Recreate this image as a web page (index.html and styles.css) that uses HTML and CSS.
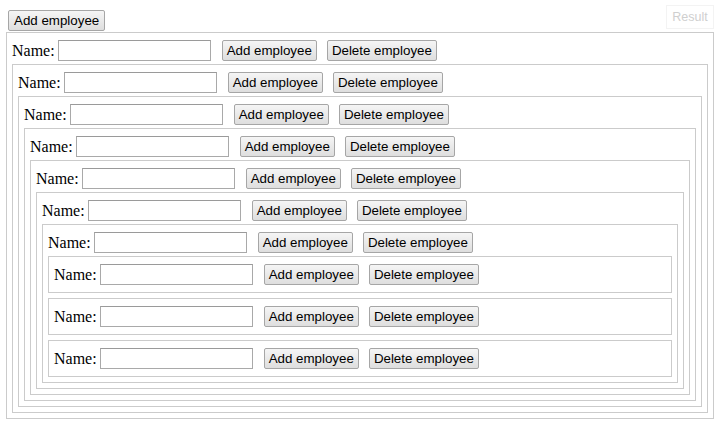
FILE: index.html
```html
<!DOCTYPE html>
<html lang="en">
<head>
  <meta charset="UTF-8" />
  <title>Employees</title>
  <link rel="stylesheet" href="styles.css">
</head>
<body>
  <div class="result-tag">Result</div>

  <div class="page">
    <button class="btn top-add" onclick="addRoot()">Add employee</button>
    <div id="tree"></div>
  </div>

  <script>
    // --- DATA ---
    let tree = [
      { name: "", children: [
        { name: "", children: [
          { name: "", children: [
            { name: "", children: [
              { name: "", children: [
                { name: "", children: [
                  { name: "", children: [
                    { name: "", children: [] },
                    { name: "", children: [] },
                    { name: "", children: [] }
                  ] }
                ] }
              ] }
            ] }
          ] }
        ] }
      ] }
    ];

    function renderNode(node, list) {
      const box = document.createElement("div");
      box.className = "employee";

      const row = document.createElement("div");
      row.className = "row";
      row.innerHTML = `
        <label class="name-label">Name:</label>
        <input type="text" class="name-input" />
        <button class="btn add-btn">Add employee</button>
        <button class="btn delete-btn">Delete employee</button>
      `;
      const input = row.querySelector(".name-input");
      input.value = node.name;
      input.addEventListener("input", () => node.name = input.value);
      row.querySelector(".add-btn").addEventListener("click", () => {
        node.children.push({ name: "", children: [] });
        render();
      });
      row.querySelector(".delete-btn").addEventListener("click", () => {
        list.splice(list.indexOf(node), 1);
        render();
      });
      box.appendChild(row);

      if (node.children.length) {
        const kids = document.createElement("div");
        kids.className = "children";
        node.children.forEach(child => kids.appendChild(renderNode(child, node.children)));
        box.appendChild(kids);
      }
      return box;
    }

    function render() {
      const root = document.getElementById("tree");
      root.innerHTML = "";
      tree.forEach(node => root.appendChild(renderNode(node, tree)));
    }

    function addRoot() {
      tree.push({ name: "", children: [] });
      render();
    }

    render();
  </script>
</body>
</html>
```

FILE: styles.css
```css
body {
  margin: 0;
  font-family: "Liberation Serif", "Times New Roman", serif;
  font-size: 16px;
  color: #000;
  background: #fff;
}
.page {
  padding: 10px 6px 0 6px;
}
.result-tag {
  position: absolute;
  top: 5px;
  right: 6px;
  width: 48px;
  height: 24px;
  box-sizing: border-box;
  border: 1px solid #f3f3f3;
  font-family: "Liberation Sans", Arial, sans-serif;
  font-size: 12.5px;
  color: #cfcfcf;
  text-align: center;
  line-height: 22px;
}
.btn {
  font-family: "Liberation Sans", Arial, sans-serif;
  font-size: 13.33px;
  color: #000;
  height: 21px;
  padding: 0 4px;
  border: 1px solid #a6a6a6;
  border-radius: 2px;
  background: linear-gradient(#f5f5f5, #dedede);
  cursor: pointer;
}
.btn:hover {
  background: linear-gradient(#fafafa, #e6e6e6);
}
.top-add {
  display: block;
  margin: 0 0 1px 2px;
  height: 21px;
  padding: 0 5px;
}
#tree {
  display: flex;
  flex-direction: column;
  gap: 5px;
}
.employee {
  border: 1px solid #cbcbcb;
  padding: 5px;
}
.row {
  display: flex;
  align-items: center;
  height: 25px;
}
.name-label {
  margin-right: 3px;
}
.name-input {
  width: 153px;
  height: 21px;
  box-sizing: border-box;
  border: 1px solid #a9a9a9;
  border-top-color: #9a9a9a;
  padding: 1px 3px;
  font-family: "Liberation Sans", Arial, sans-serif;
  font-size: 13.33px;
  margin: 0;
}
.add-btn {
  margin-left: 11px;
}
.delete-btn {
  margin-left: 10px;
}
.children {
  display: flex;
  flex-direction: column;
  gap: 5px;
  margin-top: 1px;
}
```
